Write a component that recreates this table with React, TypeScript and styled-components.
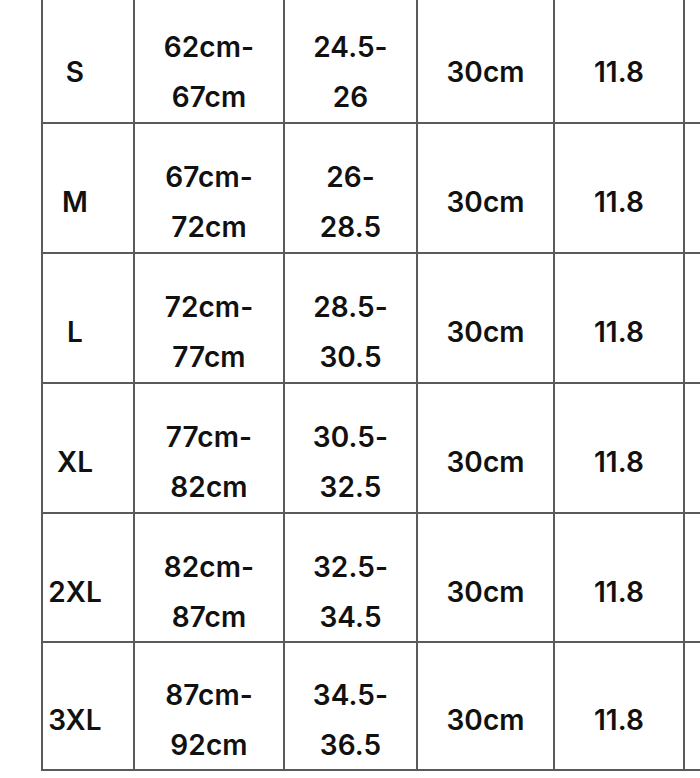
import React from 'react';
import styled, { createGlobalStyle } from 'styled-components';

const GlobalStyle = createGlobalStyle`
  html, body {
    margin: 0;
    padding: 0;
    background: #ffffff;
    overflow: hidden;
  }
  body {
    font-family: Inter, "Liberation Sans", Arial, sans-serif;
    color: #111111;
  }
`;

const Page = styled.div`
  width: 700px;
  height: 778px;
  overflow: hidden;
  padding-left: 41px;
  box-sizing: border-box;
`;

const Grid = styled.div`
  display: grid;
  grid-template-columns: 92px 150px 133px 137px 130px 130px;
  grid-template-rows: 130px 130px 130px 130px 129px 128px;
  margin-top: -8px;
  border-left: 2px solid #5a5a5a;
  border-top: 2px solid #5a5a5a;
  width: max-content;
`;

const Cell = styled.div<{ $first?: boolean }>`
  box-sizing: border-box;
  border-right: 2px solid #5a5a5a;
  border-bottom: 2px solid #5a5a5a;
  display: flex;
  flex-direction: column;
  align-items: center;
  justify-content: center;
  padding-top: 28px;
  padding-right: ${(p) => (p.$first ? '26px' : '0')};
  font-size: 28px;
  font-weight: 560;
  line-height: 50px;
  letter-spacing: 0.1px;
  white-space: nowrap;
`;

type Row = {
  size: string;
  waist: [string, string];
  inch: [string, string];
};

const rows: Row[] = [
  { size: 'S', waist: ['62cm-', '67cm'], inch: ['24.5-', '26'] },
  { size: 'M', waist: ['67cm-', '72cm'], inch: ['26-', '28.5'] },
  { size: 'L', waist: ['72cm-', '77cm'], inch: ['28.5-', '30.5'] },
  { size: 'XL', waist: ['77cm-', '82cm'], inch: ['30.5-', '32.5'] },
  { size: '2XL', waist: ['82cm-', '87cm'], inch: ['32.5-', '34.5'] },
  { size: '3XL', waist: ['87cm-', '92cm'], inch: ['34.5-', '36.5'] },
];

const App = () => {
  return (
    <Page>
      <GlobalStyle />
      <Grid>
        {rows.map((r) => (
          <React.Fragment key={r.size}>
            <Cell $first>{r.size}</Cell>
            <Cell>
              <span>{r.waist[0]}</span>
              <span>{r.waist[1]}</span>
            </Cell>
            <Cell>
              <span>{r.inch[0]}</span>
              <span>{r.inch[1]}</span>
            </Cell>
            <Cell>30cm</Cell>
            <Cell>11.8</Cell>
            <Cell />
          </React.Fragment>
        ))}
      </Grid>
    </Page>
  );
};

export default App;
